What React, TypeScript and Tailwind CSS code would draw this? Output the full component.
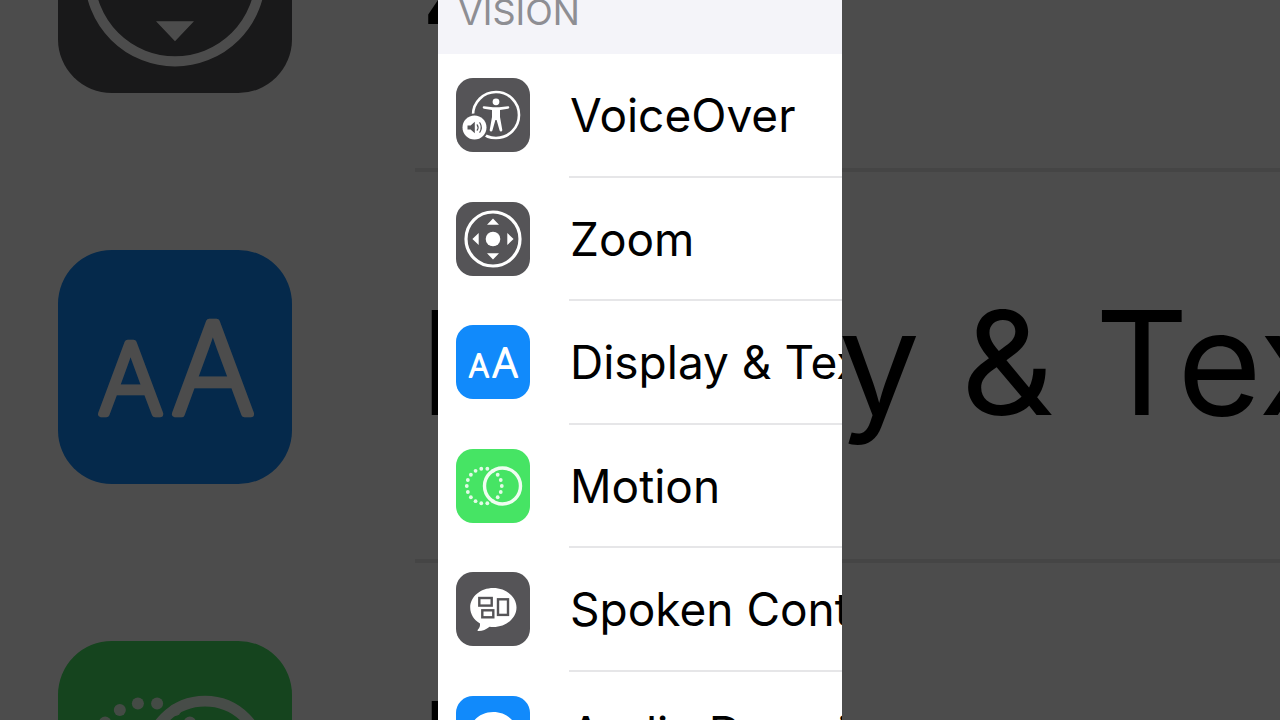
import React from "react"

const GRAY = "#555457"
const BLUE = "#118afb"
const GREEN = "#46e464"

const DOT_ANGLES = Array.from({ length: 18 }, (_, i) => (i * 20 * Math.PI) / 180)

const Tile = ({ color, children }: { color: string; children: React.ReactNode }) => (
    <svg viewBox="0 0 74 74" className="w-full h-full" aria-hidden="true">
        <rect width="74" height="74" rx="17" fill={color} />
        {children}
    </svg>
)

const VoiceOverIcon = () => (
    <Tile color={GRAY}>
        <circle cx="40" cy="37" r="23" fill="none" stroke="#fff" strokeWidth="2.6" />
        <circle cx="40" cy="23.8" r="3.4" fill="#fff" />
        <path d="M28 28.2 37 29.2H43L52 28.2Q53.4 28.2 53.3 29.6 53.2 30.6 52 30.8L44 32V39L46.3 52Q46.4 53.4 45.2 53.5 44 53.7 43.6 52.4L40.6 42H39.4L36.4 52.4Q36 53.7 34.8 53.5 33.6 53.4 33.7 52L36 39V32L28 30.8Q26.8 30.6 26.7 29.6 26.6 28.2 28 28.2Z" fill="#fff" />
        <circle cx="18.5" cy="49.5" r="14" fill={GRAY} />
        <circle cx="18.5" cy="49.5" r="12" fill="#fff" />
        <path d="M11.5 47.4H14.6L18.8 43.8V55.2L14.6 51.6H11.5Z" fill={GRAY} />
        <path d="M21.2 46.8Q23 49.5 21.2 52.2M23.8 44.8Q26.8 49.5 23.8 54.2" fill="none" stroke={GRAY} strokeWidth="1.2" strokeLinecap="round" />
    </Tile>
)

const ZoomIcon = () => (
    <Tile color={GRAY}>
        <circle cx="37" cy="37" r="27" fill="none" stroke="#fff" strokeWidth="3.2" />
        <circle cx="37" cy="37" r="7.3" fill="#fff" />
        <path d="M37 16.4 43 22.7H31ZM37 57.6 43 51.3H31ZM16.4 37 22.7 31V43ZM57.6 37 51.3 31V43Z" fill="#fff" />
    </Tile>
)

const DisplayIcon = () => (
    <Tile color={BLUE}>
        <g fill="#fff" stroke="#fff" strokeWidth="2.1" strokeLinejoin="round" fontFamily="Inter, sans-serif" fontWeight="200" textAnchor="middle">
            <text x="23" y="52" fontSize="31">A</text>
            <text x="49" y="52" fontSize="40">A</text>
        </g>
    </Tile>
)

const MotionIcon = () => (
    <Tile color={GREEN}>
        <g fill="#fff" opacity="0.85">
            {DOT_ANGLES.map(a => (
                <circle key={a} cx={28.3 + 17.5 * Math.cos(a)} cy={37 + 17.5 * Math.sin(a)} r="1.9" />
            ))}
        </g>
        <circle cx="46.5" cy="37" r="18" fill="none" stroke="#effdf0" strokeWidth="3.4" />
    </Tile>
)

const Bubble = () => (
    <path d="M37.3 16C50 16 60.5 24.7 60.5 35.5S50 55 37.3 55Q35.5 55 33.6 54.7C30 57.6 26 59.2 22.3 59Q21 58.8 21.8 57.8C23.6 55.8 24.2 54 24 51.5C18 48 14.2 42.2 14.2 35.5 14.2 24.7 24.6 16 37.3 16Z" fill="#fff" />
)

const SpokenIcon = () => (
    <Tile color={GRAY}>
        <Bubble />
        <g fill="none" stroke={GRAY} strokeWidth="2.4">
            <rect x="23.3" y="26" width="12.4" height="7.6" />
            <rect x="26.3" y="38.3" width="11" height="7" />
            <rect x="42" y="27.3" width="10" height="15.6" />
        </g>
    </Tile>
)

const AudioIcon = () => (
    <Tile color={BLUE}>
        <Bubble />
    </Tile>
)

const ROWS = [
    { label: "VoiceOver", icon: <VoiceOverIcon /> },
    { label: "Zoom", icon: <ZoomIcon /> },
    { label: "Display & Text Size", icon: <DisplayIcon /> },
    { label: "Motion", icon: <MotionIcon /> },
    { label: "Spoken Content", icon: <SpokenIcon /> },
    { label: "Audio Descriptions", icon: <AudioIcon /> },
]

// Enlarged, dimmed copy of the list that fills the sides
const Backdrop = () => (
    <div className="absolute inset-0 flex flex-col justify-center overflow-hidden bg-white pt-[14px]" aria-hidden="true">
        {ROWS.slice(1, 4).map(row => (
            <div key={row.label} className="flex h-[391px] shrink-0 items-stretch pl-[58px]">
                <div className="h-[234px] w-[234px] shrink-0 self-center">{row.icon}</div>
                <div className="ml-[123px] flex flex-1 items-center overflow-hidden border-b-4 border-[#e6e6e8] pb-1 pl-1 text-[145px] whitespace-nowrap">
                    {row.label}
                </div>
            </div>
        ))}
        <div className="absolute inset-0 bg-black/70" />
    </div>
)

export default function App() {
    return (
        <div className="relative flex h-screen justify-center overflow-hidden font-['Inter',sans-serif] text-black">
            <Backdrop />
            <main className="relative w-[404px] overflow-hidden bg-white">
                <h2 className="flex h-[54px] items-start bg-[#f4f4f9] pl-5 text-[36px] leading-6 text-[#8e8e93]">VISION</h2>
                <ul className="grid min-h-[741px] auto-rows-fr">
                    {ROWS.map(row => (
                        <li key={row.label}>
                            <a href="#" className="flex h-full items-stretch pl-[18px]">
                                <span className="mb-px h-[74px] w-[74px] shrink-0 self-center">{row.icon}</span>
                                <span className="ml-[39px] flex flex-1 items-center overflow-hidden border-b-2 border-[#e6e6e8] pt-0.5 pl-px text-[46px] whitespace-nowrap">
                                    {row.label}
                                </span>
                            </a>
                        </li>
                    ))}
                </ul>
            </main>
        </div>
    )
}
